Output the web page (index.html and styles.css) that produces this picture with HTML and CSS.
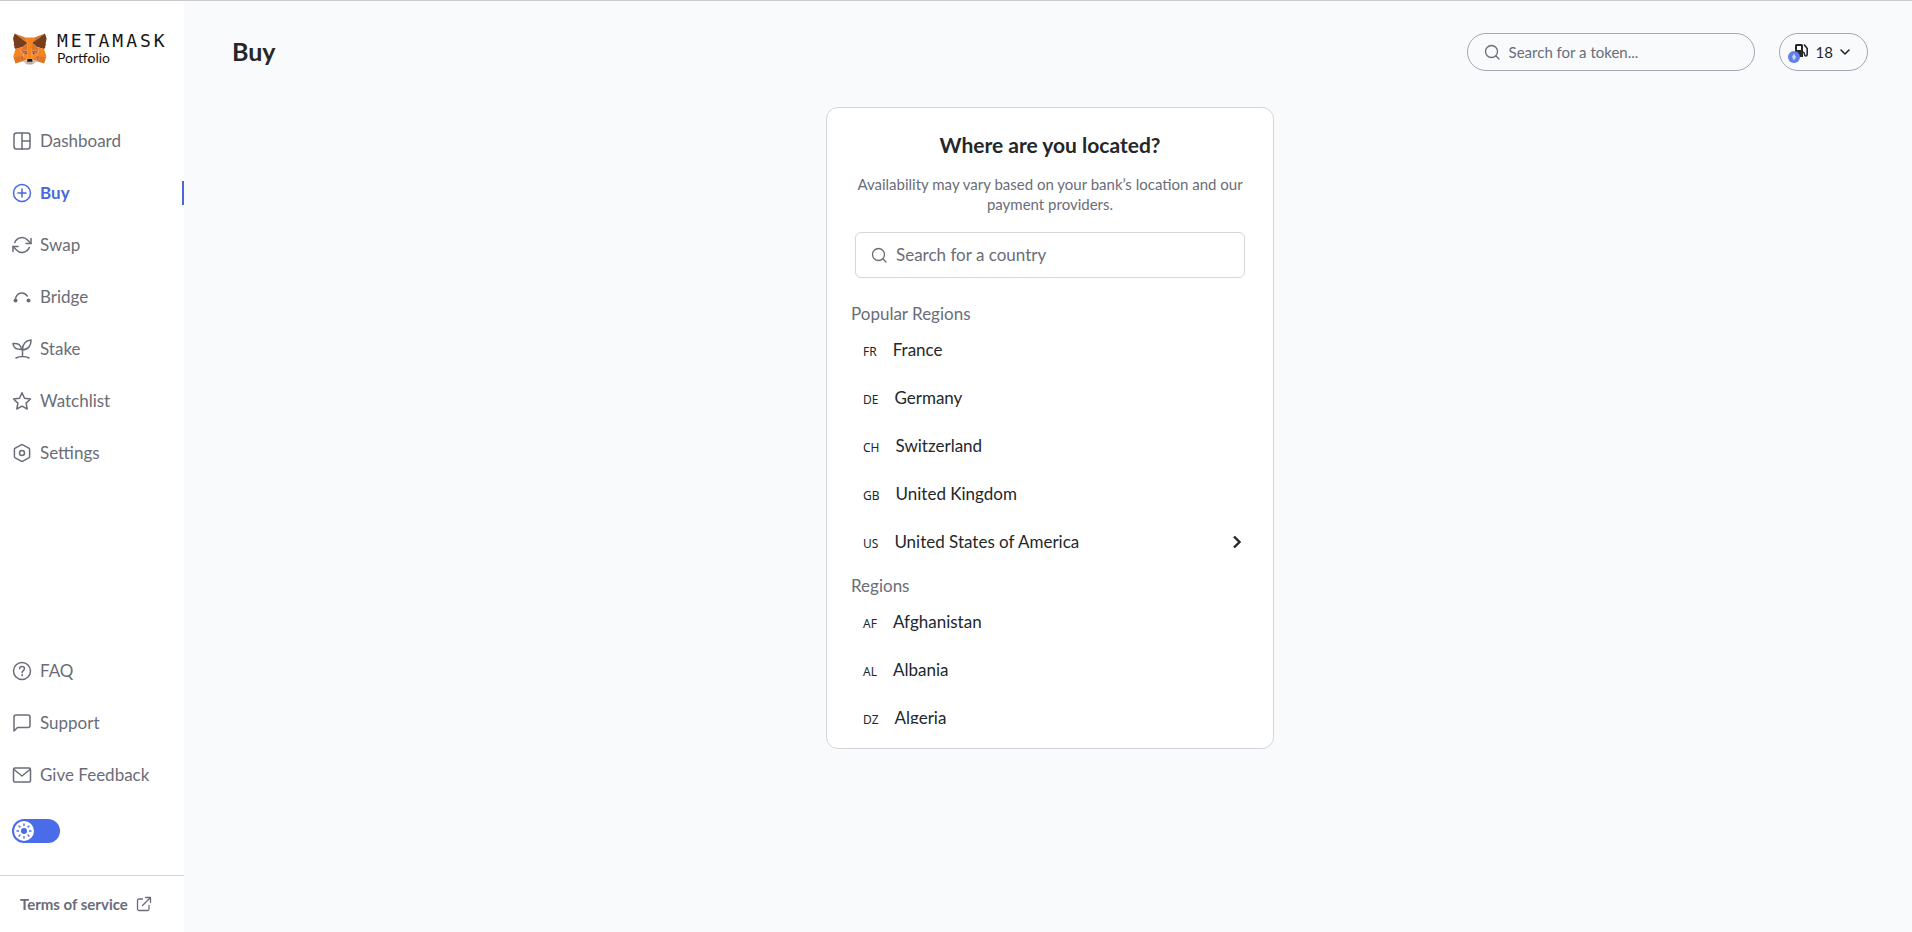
FILE: index.html
```html
<!DOCTYPE html>
<html lang="en">
<head>
  <meta charset="UTF-8">
  <meta name="viewport" content="width=device-width, initial-scale=1">
  <title>Buy | MetaMask Portfolio</title>
  <link rel="stylesheet" href="styles.css">
</head>
<body>
  <aside class="sidebar">
    <a class="logo" href="#">
      <svg class="fox" viewBox="0 0 36 33" aria-hidden="true">
        <path fill="#e17726" d="m32.96 1-13.14 9.72 2.45-5.73zM2.66 1l13.02 9.81-2.33-5.82zM28.23 23.53l-3.5 5.34 7.49 2.06 2.14-7.28zM1.27 23.65l2.13 7.28 7.47-2.06-3.48-5.34z"/>
        <path fill="#e27625" d="m10.47 14.51-2.08 3.14 7.4.34-.24-7.97zM25.15 14.51l-5.16-4.58-.17 8.06 7.4-.34zM10.87 28.87l4.49-2.16-3.86-3.01zM20.27 26.71l4.46 2.16-.61-5.17z"/>
        <path fill="#d5bfb2" d="m24.73 28.87-4.46-2.16.36 2.9-.04 1.23zM10.87 28.87l4.16 1.97-.03-1.23.36-2.9z"/>
        <path fill="#233447" d="m15.1 21.78-3.71-1.09 2.62-1.2zM20.5 21.78l1.09-2.29 2.64 1.2z"/>
        <path fill="#cc6228" d="m10.87 28.87.65-5.34-4.13.12zM24.08 23.53l.65 5.34 3.48-5.22zM27.22 17.65l-7.4.34.69 3.79 1.09-2.29 2.64 1.2zM11.39 20.69l2.62-1.2 1.09 2.29.69-3.79-7.4-.34z"/>
        <path fill="#e27525" d="m8.39 17.65 3.1 6.05-.1-3.01zM24.14 20.69l-.11 3.01 3.09-6.05zM15.79 17.99l-.69 3.79.87 4.47.19-5.89zM19.81 17.99l-.36 2.36.17 5.9.88-4.47z"/>
        <path fill="#f5841f" d="m20.5 21.78-.88 4.47.63.44 3.86-3.01.11-3.01zM11.39 20.69l.1 3.01 3.86 3.01.63-.44-.87-4.47z"/>
        <path fill="#c0ac9d" d="m20.59 30.84.04-1.23-.34-.28h-4.96l-.33.28.03 1.23-4.16-1.97 1.46 1.2 2.95 2.03h5.05l2.96-2.03 1.45-1.2z"/>
        <path fill="#161616" d="m20.27 26.71-.63-.44h-3.66l-.63.44-.36 2.9.33-.28h4.96l.34.28z"/>
        <path fill="#763e1a" d="m33.52 11.35 1.11-5.42L32.96 1l-12.69 9.37 4.89 4.12 6.89 2.01 1.51-1.77-.66-.48 1.05-.96-.8-.62 1.05-.81zM1.02 5.93l1.12 5.42-.72.53 1.06.81-.8.62 1.05.96-.66.48 1.51 1.77 6.89-2.01 4.88-4.12L2.66 1z"/>
        <path fill="#f5841f" d="m32.05 16.5-6.89-2.01 2.08 3.14-3.09 6.05 4.1-.05h6.12zM10.47 14.49 3.58 16.5 1.3 23.63h6.11l4.09.05-3.1-6.05zM19.81 17.99l.43-7.63 2-5.38h-8.89l1.98 5.38.45 7.63.17 2.38.01 5.88h3.66l.02-5.88z"/>
      </svg>
      <span class="logo-text">
        <span class="logo-name">METAMASK</span>
        <span class="logo-product">Portfolio</span>
      </span>
    </a>

    <nav class="nav">
      <a class="nav-item" href="#">
        <svg class="icon" viewBox="0 0 20 20"><rect x="2" y="2" width="16" height="16" rx="2.5"/><path d="M10 2v16M10 10h8"/></svg>
        Dashboard
      </a>
      <a class="nav-item active" href="#" aria-current="page">
        <svg class="icon" viewBox="0 0 20 20"><circle cx="10" cy="10" r="8.5"/><path d="M10 6v8M6 10h8"/></svg>
        Buy
      </a>
      <a class="nav-item" href="#">
        <svg class="icon" viewBox="0 0 20 20"><path d="M19 3.500v5h-5M1 16.500v-5h5"/><path d="M2.800 7.500A7.600 7.600 0 0 1 15.500 5L19 8.500M1 11.500 4.500 15a7.600 7.600 0 0 0 12.700-2.500"/></svg>
        Swap
      </a>
      <a class="nav-item" href="#">
        <svg class="icon" viewBox="0 0 20 20"><path d="M3.500 13C3.500 9 6 6 9.500 6c2.500 0 4.500 1 5.800 3"/><circle class="dot" cx="3.500" cy="13.500" r="2"/><circle class="dot" cx="16.500" cy="13.500" r="2"/></svg>
        Bridge
      </a>
      <a class="nav-item" href="#">
        <svg class="icon" viewBox="0 0 20 20"><path d="M10.500 17.500V11M10.500 11C10.500 5.500 13.500 1.500 19 1c.3 5-2.500 9.500-8.500 10zM9.500 10.500C4.500 10.500 1.200 8.500 1 4.500c4.500-.5 8 1 8.500 6zM4 19c3.500-2 9.500-2 13 0"/></svg>
        Stake
      </a>
      <a class="nav-item" href="#">
        <svg class="icon" viewBox="0 0 20 20"><path d="m10 1.800 2.500 5.500 6 .7-4.400 4.100 1.100 5.900-5.200-2.900L4.800 18l1.100-5.900L1.500 8l6-.7z"/></svg>
        Watchlist
      </a>
      <a class="nav-item" href="#">
        <svg class="icon" viewBox="0 0 20 20"><path d="M9.200 1.800a1.600 1.600 0 0 1 1.600 0l6 3.400c.5.300.8.800.8 1.400v6.800c0 .6-.3 1.100-.8 1.400l-6 3.400a1.600 1.600 0 0 1-1.600 0l-6-3.400c-.5-.3-.8-.8-.8-1.400V6.600c0-.6.3-1.100.8-1.400z"/><circle cx="10" cy="10" r="2.500"/></svg>
        Settings
      </a>
    </nav>

    <nav class="nav nav-bottom">
      <a class="nav-item" href="#">
        <svg class="icon" viewBox="0 0 20 20"><circle cx="10" cy="10" r="8.500"/><path d="M7.600 7.700C7.600 6.300 8.600 5.500 10 5.500s2.500.9 2.500 2.200c0 1.800-2.400 2-2.400 3.800M10.100 13.600v1.200"/></svg>
        FAQ
      </a>
      <a class="nav-item" href="#">
        <svg class="icon" viewBox="0 0 20 20"><path d="M2 18V4a2 2 0 0 1 2-2h12a2 2 0 0 1 2 2v8.500a2 2 0 0 1-2 2H5.500z"/></svg>
        Support
      </a>
      <a class="nav-item" href="#">
        <svg class="icon" viewBox="0 0 20 20"><rect x="1.500" y="3" width="17" height="14" rx="1.500"/><path d="m2 4.500 8 6.500 8-6.500"/></svg>
        Give Feedback
      </a>
    </nav>

    <label class="theme-toggle">
      <input type="checkbox" role="switch" aria-label="Toggle dark mode">
      <span class="knob">
        <svg class="sun" viewBox="0 0 16 16"><circle cx="8" cy="8" r="3"/><path d="M8 1v1.500M8 13.500V15M1 8h1.500M13.500 8H15M3 3l1 1M12 12l1 1M3 13l1-1M12 4l1-1"/></svg>
      </span>
    </label>

    <div class="sidebar-footer">
      <a class="terms" href="#">
        Terms of service
        <svg class="icon-small" viewBox="0 0 16 16"><path d="M6.500 3H3a1.500 1.500 0 0 0-1.500 1.500V13A1.500 1.500 0 0 0 3 14.500h8.500A1.500 1.500 0 0 0 13 13V9.500M9.500 1.500h5v5M14.500 1.500 6.500 9.500"/></svg>
      </a>
    </div>
  </aside>

  <main class="main">
    <header class="header">
      <h1>Buy</h1>
      <div class="header-actions">
        <label class="token-search">
          <svg class="icon-small" viewBox="0 0 16 16"><circle cx="7.500" cy="7.500" r="6"/><path d="m12 12 3 3"/></svg>
          <input type="search" placeholder="Search for a token..." aria-label="Search for a token">
        </label>
        <button class="gas" type="button" aria-label="Gas price 18">
          <svg class="gas-icon" viewBox="0 0 22 22" aria-hidden="true">
            <path class="pump" fill-rule="evenodd" d="M7 4.500A1.500 1.500 0 0 1 8.500 3h5A1.500 1.500 0 0 1 15 4.500V16H7zm2 .5v4h4V5z"/>
            <path class="hose" d="M15 11c2 0 1 4 2.700 4 1 0 1.500-.7 1.500-1.800V7.500L16.500 4"/>
            <circle class="coin" cx="6" cy="16" r="6"/>
            <path class="eth" d="m6 12.500 2 3.500-2 3.500L4 16z"/>
          </svg>
          <span>18</span>
          <svg class="caret" viewBox="0 0 12 12" aria-hidden="true"><path d="m2 4 4 4 4-4"/></svg>
        </button>
      </div>
    </header>

    <section class="card">
      <h2>Where are you located?</h2>
      <p class="hint">Availability may vary based on your bank’s location and our payment providers.</p>
      <label class="country-search">
        <svg class="icon-small" viewBox="0 0 16 16"><circle cx="7.500" cy="7.500" r="6"/><path d="m12 12 3 3"/></svg>
        <input type="search" placeholder="Search for a country" aria-label="Search for a country">
      </label>

      <div class="regions">
        <h3>Popular Regions</h3>
        <button class="region" type="button"><span class="code">FR</span>France</button>
        <button class="region" type="button"><span class="code">DE</span>Germany</button>
        <button class="region" type="button"><span class="code">CH</span>Switzerland</button>
        <button class="region" type="button"><span class="code">GB</span>United Kingdom</button>
        <button class="region" type="button">
          <span class="code">US</span>United States of America
          <svg class="chevron" viewBox="0 0 16 16" aria-hidden="true"><path d="m5 2.500 5.500 5.500L5 13.500"/></svg>
        </button>
        <h3>Regions</h3>
        <button class="region" type="button"><span class="code">AF</span>Afghanistan</button>
        <button class="region" type="button"><span class="code">AL</span>Albania</button>
        <button class="region" type="button"><span class="code">DZ</span>Algeria</button>
      </div>
    </section>
  </main>
</body>
</html>
```
FILE: styles.css
```css
:root {
  --bg: #f9fafc;
  --surface: #ffffff;
  --text: #24272a;
  --text-muted: #6a6d78;
  --border: #d3d6da;
  --border-strong: #a3a7b5;
  --primary: #4a68d8;
}
* {
  box-sizing: border-box;
}
body {
  display: flex;
  min-height: 100vh;
  margin: 0;
  border-top: 1px solid #c9c9cb;
  background: var(--bg);
  color: var(--text);
  font-family: Lato, "Open Sans", sans-serif;
  font-size: 17px;
  line-height: 24px;
}
a {
  color: inherit;
  text-decoration: none;
}
h1, h2, h3, p {
  margin: 0;
}
button, input {
  font: inherit;
  color: inherit;
}
svg {
  flex: none;
  fill: none;
  stroke: currentColor;
  stroke-linecap: round;
  stroke-linejoin: round;
}

/* sidebar */
.sidebar {
  display: flex;
  flex-direction: column;
  flex: none;
  width: 184px;
  background: var(--surface);
  color: var(--text-muted);
}
.logo {
  display: flex;
  align-items: center;
  gap: 9px;
  padding: 31px 12px 0;
  margin-bottom: 49px;
}
.fox {
  width: 36px;
  height: 34px;
  stroke: none;
}
.logo-text {
  display: flex;
  flex-direction: column;
  color: #161616;
}
.logo-name {
  font-family: "DejaVu Sans Mono", monospace;
  font-size: 18px;
  line-height: 18px;
  letter-spacing: 3px;
}
.logo-product {
  font-size: 14px;
  line-height: 16px;
}
.nav {
  display: flex;
  flex-direction: column;
}
.nav-item {
  display: flex;
  align-items: center;
  gap: 8px;
  height: 24px;
  padding-left: 12px;
  margin: 14px 0;
}
.nav-item.active {
  border-right: 2px solid var(--primary);
  color: var(--primary);
  font-weight: bold;
}
.nav-bottom {
  margin-top: auto;
}
.icon {
  width: 20px;
  height: 20px;
  stroke-width: 1.5;
}
.icon .dot {
  fill: currentColor;
  stroke: none;
}
.icon-small {
  width: 16px;
  height: 16px;
  stroke-width: 1.3;
}
.theme-toggle {
  display: flex;
  width: 48px;
  height: 24px;
  padding: 2px;
  margin: 18px 12px 32px;
  border-radius: 12px;
  background: #4a6ce8;
  cursor: pointer;
}
.theme-toggle input {
  width: 0;
  height: 0;
  margin: 0;
  appearance: none;
}
.theme-toggle input:checked + .knob {
  margin-left: auto;
}
.knob {
  display: flex;
  width: 20px;
  height: 20px;
  align-items: center;
  justify-content: center;
  border-radius: 50%;
  background: #ffffff;
  color: #4a6ce8;
}
.sun {
  width: 16px;
  height: 16px;
  stroke-width: 1.4;
}
.sun circle {
  fill: currentColor;
  stroke: none;
}
.sidebar-footer {
  padding: 16px 20px;
  border-top: 1px solid var(--border);
}
.terms {
  display: flex;
  align-items: center;
  gap: 8px;
  font-size: 15px;
  font-weight: bold;
}

/* page */
.main {
  flex: 1;
  padding: 32px 44px 32px 48px;
}
.header {
  display: flex;
  justify-content: space-between;
  margin-bottom: 36px;
}
h1 {
  font-size: 25px;
  line-height: 36px;
}
.header-actions {
  display: flex;
  gap: 24px;
  font-size: 15px;
}
.token-search {
  display: flex;
  align-items: center;
  gap: 9px;
  width: 288px;
  height: 38px;
  padding: 0 16px;
  border: 1px solid var(--border-strong);
  border-radius: 19px;
  color: var(--text-muted);
}
.token-search input,
.country-search input {
  flex: 1;
  min-width: 0;
  padding: 0;
  border: 0;
  outline: 0;
  background: none;
}
input::placeholder {
  color: var(--text-muted);
  opacity: 1;
}
.gas {
  display: flex;
  align-items: center;
  gap: 6px;
  height: 38px;
  padding: 0 16px 0 8px;
  border: 1px solid var(--border-strong);
  border-radius: 19px;
  background: none;
  cursor: pointer;
}
.gas-icon {
  width: 22px;
  height: 22px;
}
.gas-icon .pump {
  fill: currentColor;
  stroke: none;
}
.gas-icon .hose {
  stroke-width: 1.6;
}
.gas-icon .coin {
  fill: #627eea;
  stroke: none;
}
.gas-icon .eth {
  fill: #c9d3fa;
  stroke: none;
}
.caret {
  width: 12px;
  height: 12px;
  stroke-width: 1.6;
}

/* region picker */
.card {
  width: 100%;
  max-width: 448px;
  padding: 24px;
  margin: 0 auto;
  border: 1px solid var(--border);
  border-radius: 12px;
  background: var(--surface);
}
h2 {
  margin-bottom: 16px;
  font-size: 21px;
  line-height: 26px;
  text-align: center;
}
.hint {
  color: var(--text-muted);
  font-size: 15px;
  line-height: 20px;
  text-align: center;
}
.country-search {
  display: flex;
  align-items: center;
  gap: 9px;
  height: 46px;
  padding: 0 15px;
  margin: 18px 4px 16px;
  border: 1px solid var(--border);
  border-radius: 6px;
  color: var(--text-muted);
}
.regions {
  height: 430px;
  overflow-y: auto;
  scrollbar-width: none;
}
h3 {
  padding-top: 8px;
  color: var(--text-muted);
  font-size: 17px;
  font-weight: normal;
}
.region {
  display: flex;
  align-items: baseline;
  width: 100%;
  height: 48px;
  padding: 0 4px 0 12px;
  border: 0;
  background: none;
  line-height: 48px;
  text-align: left;
  cursor: pointer;
}
.code {
  margin-right: 16px;
  font-family: "Noto Sans", sans-serif;
  font-size: 12px;
}
.chevron {
  align-self: center;
  width: 16px;
  height: 16px;
  margin-left: auto;
  stroke-width: 2.4;
  stroke-linecap: butt;
  stroke-linejoin: miter;
}
```
